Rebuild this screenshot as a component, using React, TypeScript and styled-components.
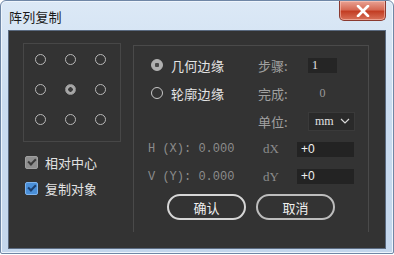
import styled, { createGlobalStyle } from "styled-components";

const GlobalStyle = createGlobalStyle`
  html, body {
    margin: 0;
    padding: 0;
    background: #ffffff;
  }
  body {
    font-family: "Noto Sans CJK SC", "Noto Sans", sans-serif;
  }
`;

const cjk = `"Noto Sans CJK SC", "Noto Sans", sans-serif`;
const mono = `"Liberation Mono", "DejaVu Sans Mono", monospace`;

export default function App() {
  const dots = Array.from({ length: 9 }, (_, i) => i);

  return (
    <>
      <GlobalStyle />
      <Window>
        <TitleBar>
          <Title>阵列复制</Title>
          <CloseButton>
            <svg width="14" height="12" viewBox="0 0 14 12">
              <path
                d="M2 1 L12 11 M12 1 L2 11"
                stroke="#ffffff"
                strokeWidth="2.6"
                strokeLinecap="round"
              />
            </svg>
          </CloseButton>
        </TitleBar>
        <Body>
          <LeftColumn>
            <AnchorBox>
              {dots.map((i) => (
                <AnchorCell key={i}>
                  <Anchor $active={i === 4} />
                </AnchorCell>
              ))}
            </AnchorBox>
            <CheckRow $top={14}>
              <CheckBox $disabled>
                <CheckMark />
              </CheckBox>
              <CheckLabel>相对中心</CheckLabel>
            </CheckRow>
            <CheckRow $top={13}>
              <CheckBox>
                <CheckMark />
              </CheckBox>
              <CheckLabel>复制对象</CheckLabel>
            </CheckRow>
          </LeftColumn>

          <RightPanel>
            <Row>
              <LeftPart>
                <Radio $checked />
                <RadioLabel>几何边缘</RadioLabel>
              </LeftPart>
              <FieldLabel>步骤:</FieldLabel>
              <SmallInput>1</SmallInput>
            </Row>
            <Row>
              <LeftPart>
                <Radio />
                <RadioLabel>轮廓边缘</RadioLabel>
              </LeftPart>
              <FieldLabel>完成:</FieldLabel>
              <Value>0</Value>
            </Row>
            <Row>
              <LeftPart />
              <FieldLabel>单位:</FieldLabel>
              <Select>
                <span>mm</span>
                <svg width="10" height="6" viewBox="0 0 10 6">
                  <path
                    d="M1 1 L5 5 L9 1"
                    fill="none"
                    stroke="#d8d8d8"
                    strokeWidth="1.2"
                  />
                </svg>
              </Select>
            </Row>
            <Row>
              <CoordText>H (X): 0.000</CoordText>
              <DeltaLabel>dX</DeltaLabel>
              <DeltaInput>+0</DeltaInput>
            </Row>
            <Row $height={27}>
              <CoordText>V (Y): 0.000</CoordText>
              <DeltaLabel>dY</DeltaLabel>
              <DeltaInput>+0</DeltaInput>
            </Row>
            <ButtonRow>
              <PillButton $primary>确认</PillButton>
              <PillButton>取消</PillButton>
            </ButtonRow>
          </RightPanel>
        </Body>
      </Window>
    </>
  );
}

const Window = styled.div`
  width: 392px;
  height: 252px;
  display: flex;
  flex-direction: column;
  border: 1px solid #6f87a6;
  border-radius: 6px 6px 2px 2px;
  background: linear-gradient(180deg, #dce9f6 0%, #cadcf0 40%, #c3d6ec 100%);
  box-shadow: inset 0 0 0 1px #eef5fc;
  overflow: hidden;
`;

const TitleBar = styled.div`
  height: 29px;
  display: flex;
  align-items: flex-start;
  justify-content: space-between;
  padding: 0 7px 0 8px;
`;

const Title = styled.div`
  font-family: ${cjk};
  font-size: 13px;
  color: #1a1a1a;
  margin-top: 6px;
  letter-spacing: 0.2px;
`;

const CloseButton = styled.div`
  width: 45px;
  height: 19px;
  display: flex;
  align-items: center;
  justify-content: center;
  border: 1px solid #8a3a30;
  border-top: none;
  border-radius: 0 0 5px 5px;
  background: linear-gradient(180deg, #e9a394 0%, #d66a55 45%, #c33e24 55%, #d8725a 100%);
  box-shadow: inset 0 0 0 1px rgba(255, 210, 200, 0.5);
`;

const Body = styled.div`
  flex: 1;
  margin: 0 7px 4px 7px;
  display: flex;
  background: #333333;
  border: 1px solid #5a6a80;
`;

const LeftColumn = styled.div`
  width: 110px;
  padding: 12px 0 0 14px;
  display: flex;
  flex-direction: column;
`;

const AnchorBox = styled.div`
  width: 98px;
  height: 99px;
  border: 1px solid #474747;
  box-sizing: border-box;
  display: grid;
  grid-template-columns: repeat(3, 30px);
  grid-template-rows: repeat(3, 30px);
  padding: 0 0 0 1px;
`;

const AnchorCell = styled.div`
  display: flex;
  align-items: center;
  justify-content: center;
`;

const Anchor = styled.div<{ $active?: boolean }>`
  width: 11px;
  height: 11px;
  border-radius: 50%;
  box-sizing: border-box;
  border: 1.3px solid ${(p) => (p.$active ? "#9a9a9a" : "#b8b8b8")};
  background: ${(p) =>
    p.$active ? "radial-gradient(circle, #3a3a3a 0 2px, #a8a8a8 2.5px)" : "transparent"};
`;

const CheckRow = styled.div<{ $top: number }>`
  display: flex;
  align-items: center;
  gap: 7px;
  margin-top: ${(p) => p.$top}px;
  padding-left: 2px;
`;

const CheckBox = styled.div<{ $disabled?: boolean }>`
  width: 11px;
  height: 11px;
  border-radius: 2px;
  display: flex;
  align-items: center;
  justify-content: center;
  background: ${(p) => (p.$disabled ? "#8f8f8f" : "#4a8fd8")};
  border: 1px solid ${(p) => (p.$disabled ? "#a0a0a0" : "#7fb4ee")};
  color: ${(p) => (p.$disabled ? "#3a3a3a" : "#1c3f6e")};
`;

const CheckMark = styled.div`
  width: 6px;
  height: 3px;
  border-left: 2px solid currentColor;
  border-bottom: 2px solid currentColor;
  transform: rotate(-45deg) translate(1px, -1px);
`;

const CheckLabel = styled.span`
  font-family: ${cjk};
  font-size: 13px;
  color: #e2e2e2;
  line-height: 1;
`;

const RightPanel = styled.div`
  width: 236px;
  height: 187px;
  margin-top: 14px;
  box-sizing: border-box;
  border-left: 1px solid #4a4a4a;
  border-top: 1px solid #4a4a4a;
  border-right: 1px solid #4a4a4a;
  padding-top: 5px;
  display: flex;
  flex-direction: column;
`;

const Row = styled.div<{ $height?: number }>`
  height: ${(p) => p.$height ?? 28}px;
  display: flex;
  align-items: center;
`;

const LeftPart = styled.div`
  width: 124px;
  display: flex;
  align-items: center;
  padding-left: 17px;
  box-sizing: border-box;
`;

const Radio = styled.div<{ $checked?: boolean }>`
  width: 12px;
  height: 12px;
  border-radius: 50%;
  box-sizing: border-box;
  border: 1px solid ${(p) => (p.$checked ? "#b5b5b5" : "#c8c8c8")};
  background: ${(p) =>
    p.$checked ? "radial-gradient(circle, #4a4a4a 0 2px, #b0b0b0 2.5px)" : "transparent"};
`;

const RadioLabel = styled.span`
  font-family: ${cjk};
  font-size: 13px;
  color: #e4e4e4;
  margin-left: 8px;
  letter-spacing: 0.3px;
`;

const FieldLabel = styled.span`
  width: 50px;
  font-family: ${cjk};
  font-size: 13px;
  color: #a0a0a0;
`;

const SmallInput = styled.div`
  width: 29px;
  height: 15px;
  background: #252525;
  color: #e6e6e6;
  font-family: "Liberation Serif", serif;
  font-size: 12px;
  line-height: 15px;
  padding-left: 4px;
  box-sizing: border-box;
`;

const Value = styled.span`
  width: 29px;
  text-align: center;
  font-family: "Liberation Serif", serif;
  font-size: 12px;
  color: #9a9a9a;
`;

const Select = styled.div`
  width: 47px;
  height: 19px;
  box-sizing: border-box;
  background: #2a2a2a;
  border: 1px solid #3a3a3a;
  display: flex;
  align-items: center;
  justify-content: space-between;
  padding: 0 4px 0 6px;
  color: #e2e2e2;
  font-family: "Liberation Serif", serif;
  font-size: 12px;
`;

const CoordText = styled.span`
  width: 129px;
  padding-left: 14px;
  box-sizing: border-box;
  font-family: ${mono};
  font-size: 12px;
  color: #8c8c8c;
  white-space: pre;
`;

const DeltaLabel = styled.span`
  width: 34px;
  font-family: "Liberation Serif", serif;
  font-size: 13px;
  color: #8c8c8c;
`;

const DeltaInput = styled.div`
  width: 57px;
  height: 15px;
  background: #232323;
  color: #f0f0f0;
  font-family: "Liberation Sans", sans-serif;
  font-size: 12px;
  line-height: 15px;
  padding-left: 4px;
  box-sizing: border-box;
`;

const ButtonRow = styled.div`
  display: flex;
  justify-content: center;
  gap: 10px;
  margin-top: 4px;
`;

const PillButton = styled.div<{ $primary?: boolean }>`
  width: 79px;
  height: 26px;
  box-sizing: border-box;
  border-radius: 13px;
  border: 2px solid ${(p) => (p.$primary ? "#d6d6d6" : "#bdbdbd")};
  display: flex;
  align-items: center;
  justify-content: center;
  font-family: ${cjk};
  font-size: 13px;
  color: #f0f0f0;
`;
